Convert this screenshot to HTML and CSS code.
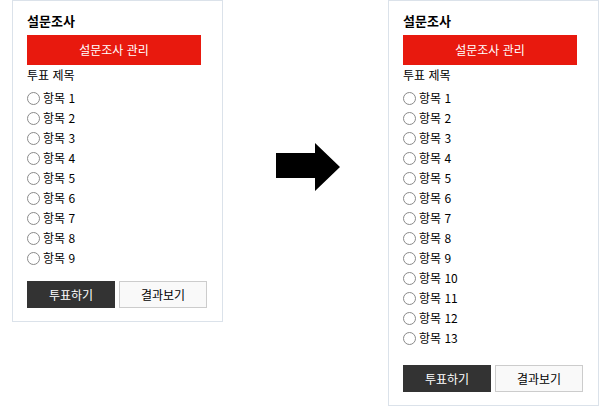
FILE: index.html
```html
<!DOCTYPE html>
<html lang="ko">
<head>
<meta charset="utf-8">
<title>설문조사</title>
<link rel="stylesheet" href="styles.css">
</head>
<body>
<div class="stage">
  <section class="poll">
    <h2 class="poll-title">설문조사</h2>
    <div class="poll-admin">설문조사 관리</div>
    <div class="poll-subject">투표 제목</div>
    <ul class="poll-list">
      <li><label><span class="radio"></span>항목 1</label></li>
      <li><label><span class="radio"></span>항목 2</label></li>
      <li><label><span class="radio"></span>항목 3</label></li>
      <li><label><span class="radio"></span>항목 4</label></li>
      <li><label><span class="radio"></span>항목 5</label></li>
      <li><label><span class="radio"></span>항목 6</label></li>
      <li><label><span class="radio"></span>항목 7</label></li>
      <li><label><span class="radio"></span>항목 8</label></li>
      <li><label><span class="radio"></span>항목 9</label></li>
    </ul>
    <div class="poll-actions">
      <button class="btn btn-vote">투표하기</button>
      <button class="btn btn-result">결과보기</button>
    </div>
  </section>

  <div class="arrow">
    <svg width="64" height="48" viewBox="0 0 64 48"><polygon points="0,10 39,10 39,0 64,24 39,48 39,35 0,35" fill="#000"/></svg>
  </div>

  <section class="poll poll-long">
    <h2 class="poll-title">설문조사</h2>
    <div class="poll-admin">설문조사 관리</div>
    <div class="poll-subject">투표 제목</div>
    <ul class="poll-list">
      <li><label><span class="radio"></span>항목 1</label></li>
      <li><label><span class="radio"></span>항목 2</label></li>
      <li><label><span class="radio"></span>항목 3</label></li>
      <li><label><span class="radio"></span>항목 4</label></li>
      <li><label><span class="radio"></span>항목 5</label></li>
      <li><label><span class="radio"></span>항목 6</label></li>
      <li><label><span class="radio"></span>항목 7</label></li>
      <li><label><span class="radio"></span>항목 8</label></li>
      <li><label><span class="radio"></span>항목 9</label></li>
      <li><label><span class="radio"></span>항목 10</label></li>
      <li><label><span class="radio"></span>항목 11</label></li>
      <li><label><span class="radio"></span>항목 12</label></li>
      <li><label><span class="radio"></span>항목 13</label></li>
    </ul>
    <div class="poll-actions">
      <button class="btn btn-vote">투표하기</button>
      <button class="btn btn-result">결과보기</button>
    </div>
  </section>
</div>
</body>
</html>
```

FILE: styles.css
```css
* { box-sizing: border-box; }
html, body { margin: 0; padding: 0; background: #fff; }
body {
  font-family: "Noto Sans CJK KR", "Noto Sans", sans-serif;
  font-size: 12px;
  color: #000;
}
.stage {
  display: flex;
  align-items: flex-start;
  padding-left: 12px;
}
.poll {
  width: 211px;
  border: 1px solid #dbe2ea;
  padding: 11px 14px 13px;
  background: #fff;
}
.poll-title {
  margin: 0;
  font-size: 13px;
  font-weight: bold;
  line-height: 18px;
}
.poll-admin {
  margin-top: 5px;
  width: 174px;
  height: 30px;
  background: #e8190e;
  color: #fff;
  font-size: 12px;
  line-height: 30px;
  text-align: center;
}
.poll-subject {
  line-height: 20px;
}
.poll-list {
  list-style: none;
  margin: 3px 0 0;
  padding: 0;
}
.poll-list li {
  height: 20px;
}
.poll-list label {
  display: flex;
  align-items: center;
  height: 20px;
  line-height: 20px;
}
.radio {
  width: 13px;
  height: 13px;
  border: 1px solid #8a8a8a;
  border-radius: 50%;
  background: #fff;
  margin-right: 3px;
  flex: none;
}
.poll-actions {
  display: flex;
  gap: 4px;
  margin-top: 13px;
}
.poll-long .poll-actions { margin-top: 17px; }
.btn {
  width: 88px;
  height: 27px;
  margin: 0;
  padding: 0;
  font-family: inherit;
  font-size: 12px;
  line-height: 25px;
  text-align: center;
  cursor: pointer;
}
.btn-vote {
  background: #333;
  color: #fff;
  border: 1px solid #333;
}
.btn-result {
  background: #f9f9f9;
  color: #000;
  border: 1px solid #ccc;
}
.arrow {
  margin: 143px 48px 0 53px;
  width: 64px;
  height: 48px;
}
.arrow svg { display: block; }
```
